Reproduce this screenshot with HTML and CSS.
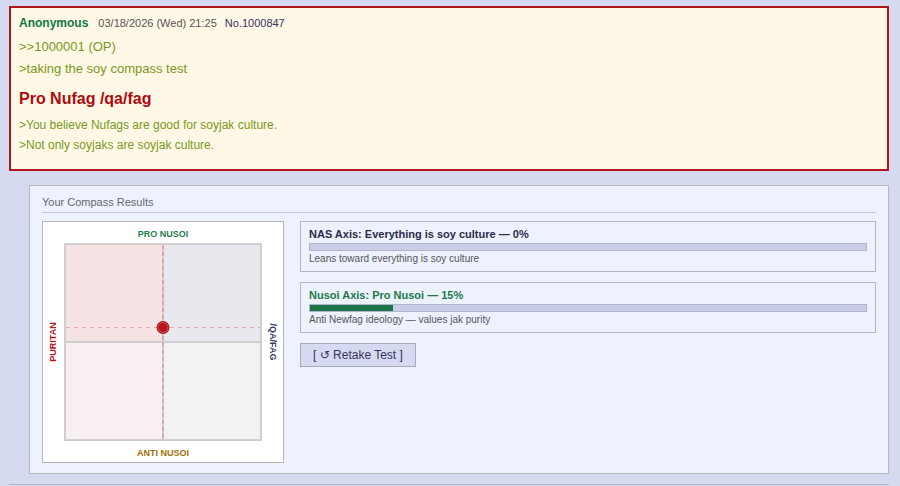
FILE: index.html
```html
<!DOCTYPE html>
<html lang="en">
<head>
<meta charset="utf-8">
<title>Soy Compass Results</title>
<link rel="stylesheet" href="styles.css">
</head>
<body>
<div class="page">
  <article class="post">
    <div class="post-head">
      <span class="name">Anonymous</span>
      <span class="date">03/18/2026 (Wed) 21:25</span>
      <span class="no">No.1000847</span>
    </div>
    <div class="quotes">
      <div class="gt">&gt;&gt;1000001 (OP)</div>
      <div class="gt">&gt;taking the soy compass test</div>
    </div>
    <h2 class="result-title">Pro Nufag /qa/fag</h2>
    <div class="result-desc">
      <div class="gt">&gt;You believe Nufags are good for soyjak culture.</div>
      <div class="gt">&gt;Not only soyjaks are soyjak culture.</div>
    </div>
  </article>

  <section class="panel">
    <div class="panel-head">Your Compass Results</div>
    <div class="panel-body">
      <div class="compass">
        <svg class="compass-svg" width="240" height="240" viewBox="0 0 240 240">
          <g shape-rendering="crispEdges">
            <rect x="23" y="23" width="97" height="97" fill="#f5e3e4"/>
            <rect x="120" y="23" width="97" height="97" fill="#e8e8ee"/>
            <rect x="23" y="120" width="97" height="97" fill="#f8f0f0"/>
            <rect x="120" y="120" width="97" height="97" fill="#f2f2f5"/>
            <line x1="23" y1="120" x2="217" y2="120" stroke="#cdcdcd" stroke-width="2"/>
            <line x1="120" y1="23" x2="120" y2="217" stroke="#dcc7cc" stroke-width="2"/>
            <line x1="120" y1="23" x2="120" y2="217" stroke="#d3a8b1" stroke-width="2" stroke-dasharray="4 3"/>
            <line x1="23" y1="105.5" x2="217" y2="105.5" stroke="#e2aab3" stroke-width="1" stroke-dasharray="4 4"/>
            <rect x="22" y="22" width="196" height="196" fill="none" stroke="#cfcfcf" stroke-width="2"/>
          </g>
          <circle cx="120" cy="105.5" r="6.5" fill="#a50f17"/>
          <circle cx="120" cy="105.5" r="5" fill="#b8141c" stroke="#d86a70" stroke-width="0.8"/>
          <text class="lbl lbl-pro" x="120" y="15" text-anchor="middle">PRO NUSOI</text>
          <text class="lbl lbl-anti" x="120" y="234" text-anchor="middle">ANTI NUSOI</text>
          <text class="lbl lbl-pur" transform="translate(13 120) rotate(-90)" text-anchor="middle">PURITAN</text>
          <text class="lbl lbl-qa" transform="translate(227 120) rotate(90)" text-anchor="middle">/QA/FAG</text>
        </svg>
      </div>
      <div class="axes">
        <div class="axis">
          <div class="axis-title">NAS Axis: Everything is soy culture — 0%</div>
          <div class="bar"><div class="bar-fill" style="width:0%"></div></div>
          <div class="axis-desc">Leans toward everything is soy culture</div>
        </div>
        <div class="axis">
          <div class="axis-title axis-title-green">Nusoi Axis: Pro Nusoi — 15%</div>
          <div class="bar"><div class="bar-fill" style="width:15%"></div></div>
          <div class="axis-desc">Anti Newfag ideology — values jak purity</div>
        </div>
        <div class="actions">
          <button class="retake" type="button">[ ↺ Retake Test ]</button>
        </div>
      </div>
    </div>
  </section>

  <hr class="sep">
</div>
</body>
</html>
```

FILE: styles.css
```css
html, body {
  margin: 0;
  padding: 0;
}

body {
  background: #d6daf0;
  font-family: "Liberation Sans", Arial, sans-serif;
  color: #000;
}

.page {
  margin: 6px 11px 0 9px;
}

.post {
  background: #fff8e7;
  border: 2px solid #b0141c;
  padding: 7px 8px 14px 8px;
}

.post-head {
  display: flex;
  align-items: baseline;
  line-height: 16px;
}

.name {
  font-size: 12px;
  font-weight: bold;
  color: #117743;
}

.date {
  font-size: 11px;
  color: #555;
  margin-left: 10px;
}

.no {
  font-size: 11px;
  color: #34345c;
  margin-left: 8px;
}

.gt {
  color: #789922;
}

.quotes {
  margin-top: 5px;
  font-size: 13px;
  line-height: 22px;
}

.result-title {
  margin: 9px 0 0 0;
  font-size: 16px;
  line-height: 20px;
  font-weight: bold;
  color: #af0a0f;
}

.result-desc {
  margin-top: 6px;
  font-size: 12px;
  line-height: 20px;
}

.panel {
  margin: 14px 0 0 20px;
  background: #eef2ff;
  border: 1px solid #b7b7b7;
  padding: 10px 12px 10px 12px;
}

.panel-head {
  font-size: 11px;
  line-height: 13px;
  color: #666;
  padding-bottom: 3px;
  border-bottom: 1px solid #c4c8e8;
  margin-bottom: 8px;
}

.panel-body {
  display: flex;
  gap: 16px;
  align-items: flex-start;
}

.compass {
  flex: none;
  width: 240px;
  height: 240px;
  background: #fff;
  border: 1px solid #b5b5b5;
}

.compass-svg {
  display: block;
}

.lbl {
  font-family: "Liberation Sans", Arial, sans-serif;
  font-size: 9px;
  font-weight: bold;
}

.lbl-pro { fill: #24804f; }
.lbl-anti { fill: #a46d0c; }
.lbl-pur { fill: #b5121b; }
.lbl-qa { fill: #3a3a66; }

.axes {
  flex: 1;
  display: flex;
  flex-direction: column;
  gap: 10px;
}

.axis {
  border: 1px solid #b7b7b7;
  padding: 6px 8px 6px 8px;
}

.axis-title {
  font-size: 11px;
  line-height: 13px;
  font-weight: bold;
  color: #2b2b4a;
}

.axis-title-green {
  color: #1b7a45;
}

.bar {
  margin-top: 2px;
  height: 6px;
  background: #c9cde7;
  border: 1px solid #b0b4cf;
}

.bar-fill {
  height: 100%;
  background: #1a7443;
}

.axis-desc {
  margin-top: 2px;
  font-size: 10px;
  line-height: 12px;
  color: #555;
}

.actions {
  display: flex;
}

.retake {
  font-family: "Liberation Sans", "DejaVu Sans", Arial, sans-serif;
  font-size: 12px;
  height: 24px;
  padding: 0 12px;
  background: #d6daf0;
  border: 1px solid #a9a9b8;
  border-radius: 0;
  color: #34345c;
  cursor: pointer;
}

.sep {
  margin: 10px 0 0 0;
  border: 0;
  border-top: 1px solid #b7b7c0;
  height: 0;
}
```
